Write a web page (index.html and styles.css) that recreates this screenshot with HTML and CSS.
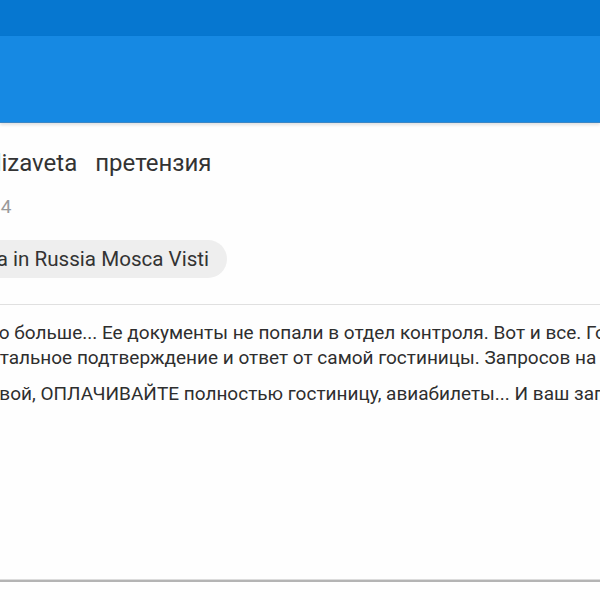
FILE: index.html
```html
<!DOCTYPE html>
<html lang="ru">
<head>
    <meta charset="UTF-8">
    <meta name="viewport" content="width=device-width, initial-scale=1.0">
    <title>претензия</title>
    <link rel="stylesheet" href="styles.css">
</head>
<body>
    <div class="statusbar"></div>
    <div class="toolbar"></div>

    <div class="post">
        <div class="post-head">
            <h1 class="post-title"><span class="author">Elizaveta</span><span class="subject">претензия</span></h1>
            <div class="post-date">20.11.2014</div>
            <div class="post-tags">
                <span class="tag">Visa in Russia Mosca Visti</span>
            </div>
        </div>

        <div class="post-body">
            <p class="line line-1">Ничего больше... Ее документы не попали в отдел контроля. Вот и все. Гостиница</p>
            <p class="line line-2">документальное подтверждение и ответ от самой гостиницы. Запросов на визу</p>
            <p class="line line-3 para">визовой, ОПЛАЧИВАЙТЕ полностью гостиницу, авиабилеты... И ваш запрос</p>
        </div>
    </div>

    <div class="bottom-line"></div>
</body>
</html>
```

FILE: styles.css
```css
html, body {
    margin: 0;
    padding: 0;
    background: #fefefe;
    overflow: hidden;
}
body {
    width: 600px;
    height: 600px;
    font-family: Roboto, "Noto Sans", sans-serif;
    color: #333;
}
.statusbar {
    height: 36px;
    background-color: #0677d0;
}
.toolbar {
    height: 86px;
    background-color: #1689e3;
    border-bottom: 1px solid #3c86c4;
    box-shadow: 0 2px 3px rgba(0, 0, 0, 0.12);
}
.post {
    height: 456px;
    overflow: hidden;
}
.post-head {
    padding-top: 24px;
    border-bottom: 1px solid #e0e0e0;
    height: 182px;
    box-sizing: border-box;
}
.post-title {
    margin: 0 0 0 -18px;
    font-size: 24px;
    font-weight: normal;
    line-height: 32px;
    white-space: nowrap;
}
.post-title .subject {
    margin-left: 18px;
}
.post-date {
    margin-top: 16px;
    margin-left: -84px;
    font-size: 19px;
    line-height: 24px;
    color: #9a9a9a;
}
.post-tags {
    margin-top: 21px;
    white-space: nowrap;
}
.tag {
    display: inline-block;
    margin-left: -48px;
    padding: 0 18px 0 16px;
    height: 38px;
    line-height: 38px;
    border-radius: 19px;
    background-color: #eeeeee;
    font-size: 20.6px;
}
.post-body {
    padding-top: 15px;
}
.line {
    margin: 0;
    font-size: 19px;
    line-height: 25px;
    white-space: nowrap;
    color: #2e2e2e;
}
.line-1 {
    margin-left: -54px;
}
.line-2 {
    margin-left: -77px;
}
.line-3 {
    margin-left: -43px;
}
.para {
    margin-top: 11px;
}
.bottom-line {
    height: 2px;
    background-color: #b4b4b4;
    border-top: 1px solid #dcdcdc;
}
```
